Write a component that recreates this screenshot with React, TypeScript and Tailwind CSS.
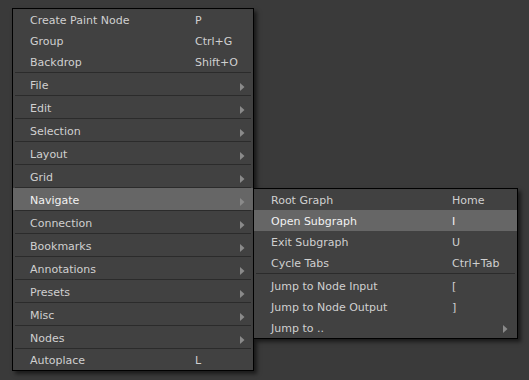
import React from "react";

type Item = { label: string; shortcut?: string; sub?: boolean; active?: boolean };

const TOP: Item[] = [
  { label: "Create Paint Node", shortcut: "P" },
  { label: "Group", shortcut: "Ctrl+G" },
  { label: "Backdrop", shortcut: "Shift+O" },
];

const SUBS = [
  "File",
  "Edit",
  "Selection",
  "Layout",
  "Grid",
  "Navigate",
  "Connection",
  "Bookmarks",
  "Annotations",
  "Presets",
  "Misc",
  "Nodes",
];

const NAV_A: Item[] = [
  { label: "Root Graph", shortcut: "Home" },
  { label: "Open Subgraph", shortcut: "I", active: true },
  { label: "Exit Subgraph", shortcut: "U" },
  { label: "Cycle Tabs", shortcut: "Ctrl+Tab" },
];

const NAV_B: Item[] = [
  { label: "Jump to Node Input", shortcut: "[" },
  { label: "Jump to Node Output", shortcut: "]" },
  { label: "Jump to ..", sub: true },
];

function Arrow() {
  return (
    <svg width="5" height="8" viewBox="0 0 5 8" className="shrink-0">
      <path d="M0 0 L4.5 4 L0 8 Z" fill="#8a8a8a" />
    </svg>
  );
}

function Sep() {
  return <div className="mx-[2px] h-px bg-[#2b2b2b]" />;
}

function Row({
  item,
  h,
  labelW,
  pr,
}: {
  item: Item;
  h: string;
  labelW: string;
  pr: string;
}) {
  return (
    <div
      className={`flex items-center pl-[17px] ${h} ${pr} ${
        item.active ? "bg-[#666666] text-[#f2f2f2]" : "text-[#d0d0d0]"
      }`}
    >
      <span className={`${labelW} shrink-0`}>{item.label}</span>
      <span className="flex-1">{item.shortcut}</span>
      {item.sub && <Arrow />}
    </div>
  );
}

function NavigateMenu() {
  return (
    <div className="absolute left-[240px] top-[1px] z-10 w-[265px] border border-black bg-[#414141] shadow-[3px_3px_4px_rgba(0,0,0,0.55)]">
      {NAV_A.map((it) => (
        <Row key={it.label} item={it} h="h-[21px] pt-[3px]" labelW="w-[181px]" pr="pr-[9px]" />
      ))}
      <div className="pb-px">
        <Sep />
      </div>
      {NAV_B.map((it) => (
        <Row key={it.label} item={it} h="h-[21px] pt-[3px]" labelW="w-[181px]" pr="pr-[9px]" />
      ))}
    </div>
  );
}

export default function App() {
  return (
    <div
      className="h-[380px] w-[529px] overflow-hidden bg-[#3a3a3a] pl-[12px] pt-[8px] text-[11px]"
      style={{ fontFamily: '"DejaVu Sans", Verdana, sans-serif' }}
    >
      <div className="relative w-[242px] border border-black bg-[#414141] shadow-[3px_3px_4px_rgba(0,0,0,0.55)]">
        {TOP.map((it) => (
          <Row key={it.label} item={it} h="h-[21px] pt-[3px]" labelW="w-[165px]" pr="pr-[8px]" />
        ))}
        {SUBS.map((label) => (
          <div key={label} className="relative">
            <Sep />
            <Row
              item={{ label, sub: true, active: label === "Navigate" }}
              h="h-[22px] pt-[5px]"
              labelW="w-[165px]"
              pr="pr-[8px]"
            />
            {label === "Navigate" && <NavigateMenu />}
          </div>
        ))}
        <Sep />
        <Row item={{ label: "Autoplace", shortcut: "L" }} h="h-[21px] pt-[4px]" labelW="w-[165px]" pr="pr-[8px]" />
      </div>
    </div>
  );
}
